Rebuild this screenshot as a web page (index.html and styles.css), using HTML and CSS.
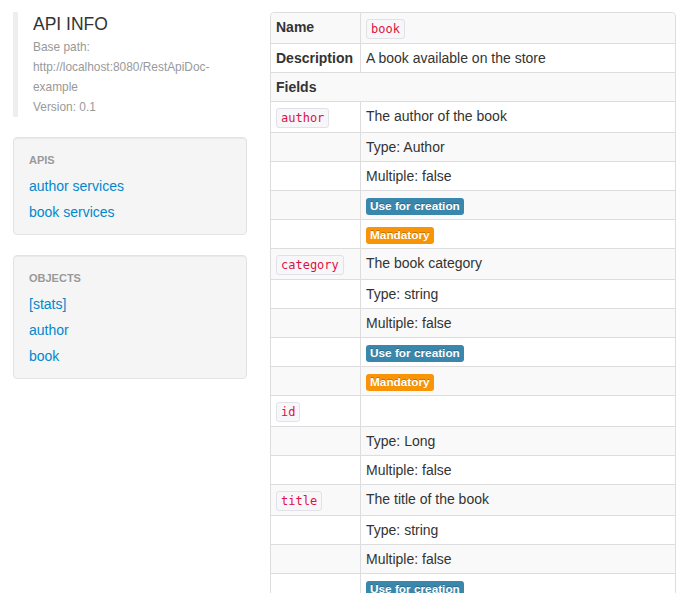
FILE: index.html
```html
<!DOCTYPE html>
<html>
<head>
<meta charset="utf-8">
<title>RestApiDoc</title>
<link rel="stylesheet" href="styles.css">
</head>
<body>
<div class="page">
  <aside class="sidebar">
    <blockquote class="info">
      <p class="info-title">API INFO</p>
      <small>Base path: http://localhost:8080/RestApiDoc-example</small>
      <small>Version: 0.1</small>
    </blockquote>
    <div class="well">
      <ul class="nav-list">
        <li class="nav-header">APIs</li>
        <li><a href="#">author services</a></li>
        <li><a href="#">book services</a></li>
      </ul>
    </div>
    <div class="well">
      <ul class="nav-list">
        <li class="nav-header">Objects</li>
        <li><a href="#">[stats]</a></li>
        <li><a href="#">author</a></li>
        <li><a href="#">book</a></li>
      </ul>
    </div>
  </aside>
  <main class="content">
    <table class="doc">
      <tbody>
        <tr><th class="k">Name</th><td><code>book</code></td></tr>
        <tr><th class="k">Description</th><td>A book available on the store</td></tr>
        <tr><th colspan="2">Fields</th></tr>
        <tr><td class="k"><code>author</code></td><td>The author of the book</td></tr>
        <tr><td class="k"></td><td>Type: Author</td></tr>
        <tr><td class="k"></td><td>Multiple: false</td></tr>
        <tr><td class="k"></td><td><span class="label label-info">Use for creation</span></td></tr>
        <tr><td class="k"></td><td><span class="label label-warning">Mandatory</span></td></tr>
        <tr><td class="k"><code>category</code></td><td>The book category</td></tr>
        <tr><td class="k"></td><td>Type: string</td></tr>
        <tr><td class="k"></td><td>Multiple: false</td></tr>
        <tr><td class="k"></td><td><span class="label label-info">Use for creation</span></td></tr>
        <tr><td class="k"></td><td><span class="label label-warning">Mandatory</span></td></tr>
        <tr><td class="k"><code>id</code></td><td></td></tr>
        <tr><td class="k"></td><td>Type: Long</td></tr>
        <tr><td class="k"></td><td>Multiple: false</td></tr>
        <tr><td class="k"><code>title</code></td><td>The title of the book</td></tr>
        <tr><td class="k"></td><td>Type: string</td></tr>
        <tr><td class="k"></td><td>Multiple: false</td></tr>
        <tr><td class="k"></td><td><span class="label label-info">Use for creation</span></td></tr>
        <tr><td class="k"></td><td><span class="label label-warning">Mandatory</span></td></tr>
      </tbody>
    </table>
  </main>
</div>
</body>
</html>
```

FILE: styles.css
```css
html {
  overflow: hidden;
}
body {
  margin: 0;
  font-family: "Liberation Sans", Arial, Helvetica, sans-serif;
  font-size: 14px;
  line-height: 20px;
  color: #333;
  background: #fff;
}
.page {
  display: flex;
  align-items: flex-start;
  gap: 23px;
  padding: 12px 19px 20px 13px;
}
.sidebar {
  width: 234px;
  flex: none;
}
.info {
  margin: 0 0 20px;
  padding: 0 0 0 15px;
  border-left: 5px solid #eee;
}
.info-title {
  margin: 0;
  font-size: 17.5px;
  line-height: 25px;
  color: #333;
}
.info small {
  display: block;
  font-size: 11.9px;
  line-height: 20px;
  color: #999;
}
.well {
  background: #f5f5f5;
  border: 1px solid #e3e3e3;
  border-radius: 4px;
  box-shadow: inset 0 1px 1px rgba(0,0,0,0.05);
  padding: 9px 0;
  margin-bottom: 20px;
}
.nav-list {
  list-style: none;
  margin: 0;
  padding: 0 15px;
}
.nav-list li > a,
.nav-list .nav-header {
  display: block;
  padding: 3px 0;
}
.nav-header {
  font-size: 11px;
  font-weight: bold;
  line-height: 20px;
  color: #999;
  text-transform: uppercase;
  text-shadow: 0 1px 0 rgba(255,255,255,0.5);
}
.nav-list a {
  color: #0088cc;
  text-decoration: none;
}
.content {
  flex: 1;
  min-width: 0;
}
.doc {
  width: 100%;
  border-collapse: separate;
  border-spacing: 0;
  border: 1px solid #ddd;
  border-radius: 4px;
}
.doc th,
.doc td {
  padding: 4px 5px;
  text-align: left;
  vertical-align: top;
  border-top: 1px solid #ddd;
}
.doc th {
  font-weight: bold;
}
.doc tr:first-child > th,
.doc tr:first-child > td {
  border-top: 0;
}
.doc th + td,
.doc td + td {
  border-left: 1px solid #ddd;
}
.doc .k {
  width: 79px;
  white-space: nowrap;
}
.doc tbody > tr:nth-child(odd) > td,
.doc tbody > tr:nth-child(odd) > th {
  background: #f9f9f9;
}
.doc tr:first-child > th { border-top-left-radius: 4px; }
.doc tr:first-child > td { border-top-right-radius: 4px; }
code {
  display: inline-block;
  vertical-align: top;
  margin-top: 2px;
  padding: 2px 4px;
  font-family: "DejaVu Sans Mono", Menlo, Consolas, monospace;
  font-size: 12px;
  line-height: 14px;
  color: #dd1144;
  background: #f7f7f9;
  border: 1px solid #e1e1e8;
  border-radius: 3px;
}
.label {
  display: inline-block;
  padding: 2px 4px;
  font-size: 11.8px;
  font-weight: bold;
  line-height: 13px;
  color: #fff;
  text-shadow: 0 -1px 0 rgba(0,0,0,0.25);
  white-space: nowrap;
  vertical-align: baseline;
  border-radius: 3px;
}
.label-info { background: #3a87ad; }
.label-warning { background: #f89406; }
```
